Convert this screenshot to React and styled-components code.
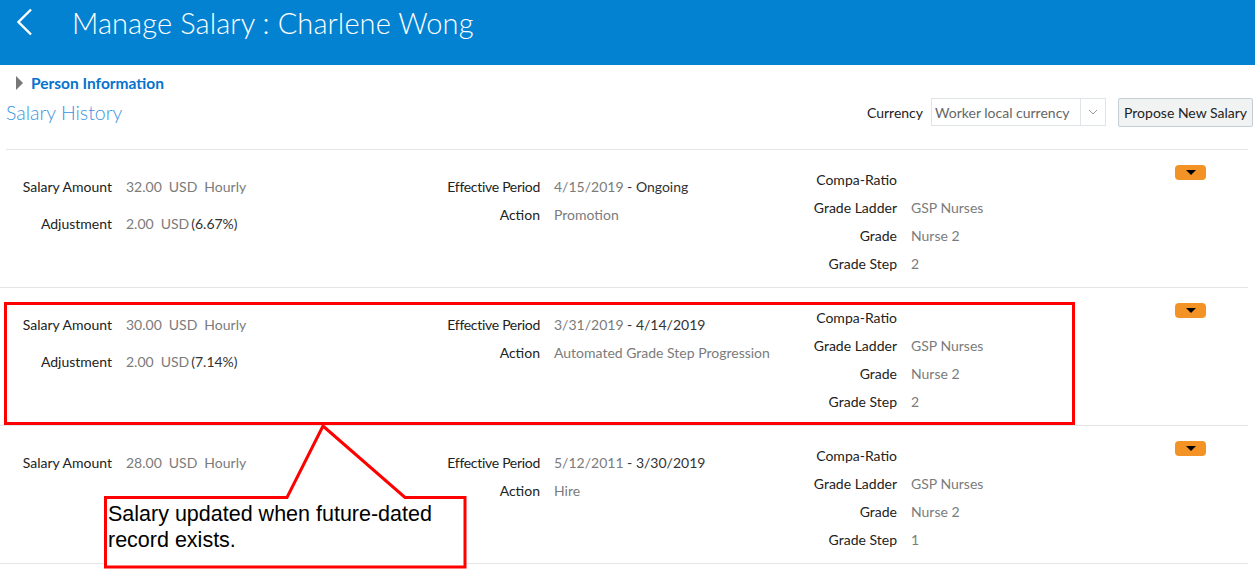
import styled, { createGlobalStyle } from "styled-components";

const GlobalStyle = createGlobalStyle`
  body {
    margin: 0;
    background: #fff;
    font-family: Lato, "Noto Sans", sans-serif;
    color: #333;
  }
`

const Page = styled.div`
  position: relative;
  width: 1255px;
  height: 586px;
  overflow: hidden;
`

const Header = styled.div`
  height: 65px;
  background: #0482d2;
  display: flex;
  align-items: flex-start;
  padding-left: 15px;
  box-sizing: border-box;
`

const Back = styled.div`
  width: 57px;
  padding-top: 8px;
`

const Title = styled.h1`
  margin: 5px 0 0;
  font-size: 29px;
  font-weight: 300;
  color: #fff;
  letter-spacing: 0.1px;
`

const Disclosure = styled.div`
  display: flex;
  align-items: center;
  gap: 8px;
  padding: 10px 0 0 16px;
  height: 16px;
  font-size: 15.5px;
  font-weight: 700;
  color: #0572ce;
`

const Caret = styled.span`
  width: 0;
  height: 0;
  border-top: 7px solid transparent;
  border-bottom: 7px solid transparent;
  border-left: 7px solid #777;
`

const Toolbar = styled.div`
  display: flex;
  align-items: center;
  padding: 7px 2px 0 6px;
  height: 28px;
`

const SectionTitle = styled.h2`
  margin: 0;
  flex: 1;
  font-size: 19.5px;
  font-weight: 300;
  color: #3a93de;
`

const FieldLabel = styled.span`
  font-size: 14px;
  color: #222;
  margin-right: 8px;
`

const Select = styled.div`
  display: flex;
  height: 28px;
  width: 175px;
  border: 1px solid #dfe4e7;
  box-sizing: border-box;
  margin-right: 12px;
`

const SelectText = styled.span`
  flex: 1;
  padding-left: 3px;
  font-size: 14px;
  line-height: 28px;
  color: #666;
  white-space: nowrap;
`

const SelectArrow = styled.span`
  width: 24px;
  border-left: 1px solid #dfe4e7;
  display: flex;
  align-items: center;
  justify-content: center;
`

const Button = styled.button`
  height: 29px;
  padding: 0 5px;
  font-family: inherit;
  font-size: 14px;
  color: #222;
  background: #f1f3f3;
  border: 1px solid #c4ced7;
  border-radius: 2px;
`

const List = styled.div`
  margin: 23px 7px 0 6px;
  border-top: 1px solid #e5e5e5;
`

const Row = styled.div`
  display: grid;
  grid-template-columns: 414px 380px 375px 1fr;
  height: 137px;
  border-bottom: 1px solid #e5e5e5;
  margin-left: -6px;
`

const Column = styled.div`
  display: grid;
  grid-template-columns: ${p => p.$label}px 1fr;
  column-gap: 14px;
  row-gap: ${p => p.$gap}px;
  align-content: start;
  padding-top: ${p => p.$top}px;
  font-size: 14px;
  line-height: 28px;
`

const Label = styled.span`
  text-align: right;
  color: #222;
  white-space: nowrap;
  letter-spacing: ${p => p.$tight ? "-0.3px" : "0"};
`

const Value = styled.span`
  color: #7b7b7b;
  white-space: nowrap;
`

const Part = styled.span`
  margin-right: 7px;
`

const Dark = styled.span`
  color: #333;
  margin-left: ${p => p.$gap || 0}px;
`

const ActionCell = styled.div`
  padding: 15px 0 0 6px;
`

const MenuButton = styled.div`
  width: 31px;
  height: 15px;
  border-radius: 4px;
  background: #f39325;
  display: flex;
  align-items: center;
  justify-content: center;
  &::after {
    content: '';
    border-left: 5px solid transparent;
    border-right: 5px solid transparent;
    border-top: 5px solid #000;
  }
`

const Highlight = styled.div`
  position: absolute;
  left: 4px;
  top: 302px;
  width: 1071px;
  height: 123px;
  border: 3px solid #f00;
  box-sizing: border-box;
`

const Callout = styled.svg`
  position: absolute;
  left: 0;
  top: 0;
  pointer-events: none;
`

const CalloutText = styled.div`
  position: absolute;
  left: 108px;
  top: 501px;
  width: 356px;
  font-family: "Liberation Sans", Arial, sans-serif;
  font-size: 21.5px;
  line-height: 26px;
  color: #000;
`

const records = [
  {
    amount: "32.00", adj: "2.00", pct: "(6.67%)",
    from: "4/15/2019", to: "Ongoing", action: "Promotion", step: "2",
  },
  {
    amount: "30.00", adj: "2.00", pct: "(7.14%)",
    from: "3/31/2019", to: "4/14/2019", action: "Automated Grade Step Progression", step: "2",
  },
  {
    amount: "28.00", from: "5/12/2011", to: "3/30/2019", action: "Hire", step: "1",
  },
];

const Record = ({ r }) => (
  <Row>
    <Column $label={112} $top={23} $gap={9}>
      <Label>Salary Amount</Label>
      <Value><Part>{r.amount}</Part><Part>USD</Part>Hourly</Value>
      {r.adj && (
        <>
          <Label>Adjustment</Label>
          <Value><Part>{r.adj}</Part>USD<Dark $gap={2}>{r.pct}</Dark></Value>
        </>
      )}
    </Column>
    <Column $label={126} $top={23} $gap={0}>
      <Label $tight>Effective Period</Label>
      <Value>{r.from}<Dark> - {r.to}</Dark></Value>
      <Label>Action</Label>
      <Value>{r.action}</Value>
    </Column>
    <Column $label={103} $top={16} $gap={0}>
      <Label>Compa-Ratio</Label>
      <Value></Value>
      <Label>Grade Ladder</Label>
      <Value>GSP Nurses</Value>
      <Label>Grade</Label>
      <Value>Nurse 2</Value>
      <Label>Grade Step</Label>
      <Value>{r.step}</Value>
    </Column>
    <ActionCell>
      <MenuButton />
    </ActionCell>
  </Row>
);

export default function App() {
  return (
    <Page>
      <GlobalStyle />
      <Header>
        <Back>
          <svg width="20" height="30" viewBox="0 0 20 30">
            <path d="M16 1.5 L3.5 14 L16 26.5" fill="none" stroke="#fff" strokeWidth="2.4" />
          </svg>
        </Back>
        <Title>Manage Salary : Charlene Wong</Title>
      </Header>
      <Disclosure>
        <Caret />
        Person Information
      </Disclosure>
      <Toolbar>
        <SectionTitle>Salary History</SectionTitle>
        <FieldLabel>Currency</FieldLabel>
        <Select>
          <SelectText>Worker local currency</SelectText>
          <SelectArrow>
            <svg width="10" height="6" viewBox="0 0 10 6">
              <path d="M1 1 L5 5 L9 1" fill="none" stroke="#999" strokeWidth="1" />
            </svg>
          </SelectArrow>
        </Select>
        <Button>Propose New Salary</Button>
      </Toolbar>
      <List>
        {records.map((r, i) => <Record key={i} r={r} />)}
      </List>
      <Highlight />
      <Callout width="1255" height="586">
        <path
          d="M105.5 497.5 L287 497.5 L323 426 L405 497.5 L465 497.5 L465 567 L105.5 567 Z"
          fill="#fff"
          stroke="#f00"
          strokeWidth="3"
        />
      </Callout>
      <CalloutText>Salary updated when future-dated record exists.</CalloutText>
    </Page>
  );
}
